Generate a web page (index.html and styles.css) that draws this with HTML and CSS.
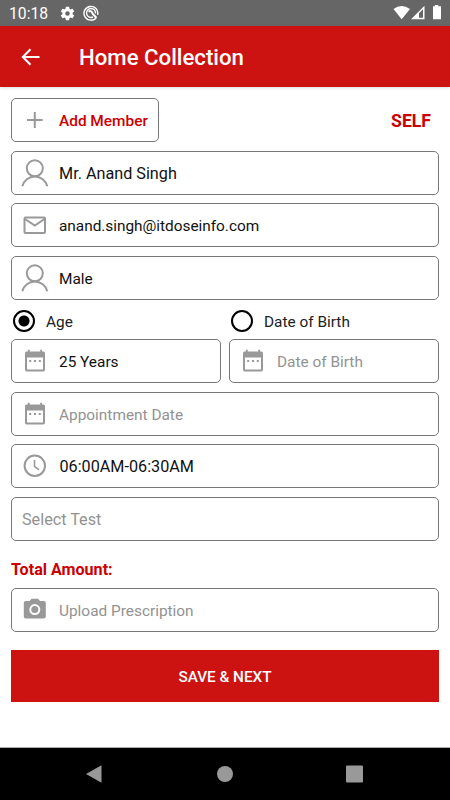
FILE: index.html
```html
<!DOCTYPE html>
<html lang="en">
<head>
<meta charset="utf-8">
<title>Home Collection</title>
<link rel="stylesheet" href="styles.css">
</head>
<body>
<svg width="0" height="0" class="defs">
  <symbol id="person" viewBox="0 0 28 28"><circle cx="13.800" cy="9.300" r="8" /><path d="M1.300 27.300A12.900 12.900 0 0 1 26.300 27.300"/></symbol>
  <symbol id="calendar" viewBox="0 0 28 28"><path fill-rule="evenodd" d="M6.800 2.800H8.700V4.600H19.200V2.800H21.100V4.600H22.500Q24 4.600 24 6.100V22.700Q24 24.500 22.200 24.500H5.600Q4 24.500 4 22.700V6.100Q4 4.600 5.500 4.600H6.800zM6 10.500V22.500H22V10.500z"/><path d="M8.200 13h2v2H8.200zM13 13h2v2H13zM17.800 13h2v2H17.800z"/></symbol>
</svg>
<div class="status">
  <span class="clock">10:18</span>
  <svg class="gear" viewBox="0 0 24 24"><path d="M19.140 12.940c.04-.3.060-.61.060-.94 0-.32-.02-.64-.07-.94l2.030-1.580c.18-.14.230-.41.120-.61l-1.920-3.320c-.12-.22-.37-.29-.59-.22l-2.390.96c-.5-.38-1.030-.7-1.620-.94l-.36-2.540c-.04-.24-.24-.41-.48-.41h-3.840c-.24 0-.43.170-.47.410l-.36 2.540c-.59.240-1.130.570-1.620.940l-2.390-.96c-.22-.08-.47 0-.59.220L2.740 8.870c-.12.210-.08.470.120.610l2.030 1.580c-.05.3-.09.630-.09.940s.02.640.070.940l-2.030 1.580c-.18.140-.23.410-.12.610l1.920 3.320c.12.220.37.290.59.220l2.390-.96c.5.380 1.030.7 1.620.94l.36 2.540c.05.240.24.410.48.410h3.840c.24 0 .44-.17.470-.41l.36-2.540c.59-.24 1.130-.56 1.620-.94l2.390.96c.22.080.47 0 .59-.22l1.920-3.320c.12-.22.070-.47-.12-.61l-2.010-1.580zM12 15.200A3.200 3.200 0 1 1 12 8.800a3.200 3.200 0 0 1 0 6.400z"/></svg>
  <svg class="ring" viewBox="0 0 16 16"><path d="M13.500 12.300A6.900 6.900 0 1 1 14.600 9.900"/><path d="M10 12A4.500 4.500 0 1 1 12.500 8.500"/><path class="needle" d="M5.500 6.600C7.500 5.400 9 6.500 9.800 8.900L13.200 12.500"/></svg>
  <svg class="signals" viewBox="0 0 50 16"><path d="M1.500 4Q9.500-1.800 18 4L9.700 14.200z"/><path fill-rule="evenodd" d="M19 14.200L32.500 .8V14.200zM27 8.300V12.700H31V4.200z"/><path d="M41 1.200H42.900V0H46.300V1.200H49V14.200H41V1.200z"/></svg>
</div>
<header>
  <svg viewBox="0 0 20 18"><path d="M18.500 9H2M9.500 1.200L1.800 9L9.500 16.800"/></svg>
  <h1>Home Collection</h1>
</header>
<main>
  <div class="top">
    <div class="field add"><svg class="icon line" viewBox="0 0 28 28"><path d="M13.800 6v16M6 14h15.600"/></svg><span>Add Member</span></div>
    <b class="self">SELF</b>
  </div>
  <div class="field"><svg class="icon line"><use href="#person"/></svg><span class="wide">Mr. Anand Singh</span></div>
  <div class="field"><svg class="icon line" viewBox="0 0 28 28"><rect x="3.500" y="6.500" width="20.500" height="15.500" rx="1"/><path d="M4 8L13.800 14.500L23.500 8"/></svg><span class="email">anand.singh@itdoseinfo.com</span></div>
  <div class="field"><svg class="icon line"><use href="#person"/></svg><span>Male</span></div>
  <div class="pair radios">
    <label><i class="radio on"></i><span>Age</span></label>
    <label><i class="radio"></i><span>Date of Birth</span></label>
  </div>
  <div class="pair fields">
    <div class="field"><svg class="icon"><use href="#calendar"/></svg><span>25 Years</span></div>
    <div class="field hint"><svg class="icon"><use href="#calendar"/></svg><span>Date of Birth</span></div>
  </div>
  <div class="field hint"><svg class="icon"><use href="#calendar"/></svg><span>Appointment Date</span></div>
  <div class="field"><svg class="icon line" viewBox="0 0 28 28"><circle cx="13.800" cy="13.800" r="10.200"/><path class="hands" d="M13.500 8V14.300L18 17.800"/></svg><span class="wide time">06:00AM-06:30AM</span></div>
  <div class="field hint bare"><span class="wide">Select Test</span></div>
  <b class="total">Total Amount:</b>
  <div class="field hint"><svg class="icon" viewBox="0 0 28 28"><path fill-rule="evenodd" d="M10.500 2.800H17L19 5H22.800Q24.800 5 24.800 7V20.500Q24.800 22.500 22.800 22.500H4.800Q2.800 22.500 2.800 20.500V7Q2.800 5 4.800 5H8.500zM13.800 8.100a5.500 5.500 0 1 0 0 11a5.500 5.500 0 0 0 0-11z"/><circle cx="13.800" cy="13.600" r="3.500"/></svg><span>Upload Prescription</span></div>
  <button>SAVE &amp; NEXT</button>
</main>
<nav>
  <svg viewBox="0 0 450 52"><path d="M86 26L101.500 17.200V34.800z"/><circle cx="225" cy="26" r="8"/><rect x="346" y="17.500" width="17" height="17" rx="1"/></svg>
</nav>
</body>
</html>
```
FILE: styles.css
```css
* { box-sizing: border-box; }
body {
  margin: 0;
  width: 450px;
  height: 800px;
  overflow: hidden;
  display: flex;
  flex-direction: column;
  background: #fff;
  font: 15.4px/20px Roboto, sans-serif;
  color: #111;
}
svg { display: block; flex: none; }
.defs { position: absolute; }
.status {
  height: 26px;
  background: #666;
  color: #fff;
  display: flex;
  align-items: center;
  padding: 0 8px 0 9px;
}
.clock { width: 50px; font-size: 15.7px; padding-top: 2px; }
.gear { width: 17px; height: 17px; fill: #fff; }
.ring { width: 16px; height: 16px; margin-left: 7px; fill: none; stroke: #fff; stroke-width: 1.400; }
.needle { stroke-width: 2; }
.signals { width: 50px; height: 16px; margin: 0 0 0 auto; fill: #fff; }
header {
  height: 61px;
  background: #cd1212;
  color: #fff;
  display: flex;
  align-items: center;
  padding-left: 21px;
  box-shadow: 0 1px 3px rgba(0, 0, 0, .15);
}
header svg { width: 20px; height: 18px; fill: none; stroke: #fff; stroke-width: 2; }
h1 { margin: 1px 0 0 38px; font-size: 22.2px; line-height: 28px; font-weight: 500; }
main { flex: 1; padding: 11px 11px 0; display: flex; flex-direction: column; gap: 8.500px; }
.top, .pair { display: flex; justify-content: space-between; gap: 9px; }
.top { align-items: center; }
.field {
  height: 44px;
  flex: none;
  border: 1px solid #777;
  border-radius: 5px;
  display: flex;
  align-items: center;
  padding-left: 9px;
}
.field span { padding-top: 2px; }
.pair .field { flex: 1; }
.fields { margin: -1px 0 .8px; }
.pair .field + .field { margin-left: -1px; }
.icon { width: 28px; height: 28px; margin-right: 10px; fill: #999; }
.line { fill: none; stroke: #999; stroke-width: 2; }
.hands { stroke-width: 1.600; }
.wide { font-size: 16.2px; }
.time { margin-left: .5px; }
.email { letter-spacing: -.02px; }
.add { width: 148px; color: #cc0000; font-weight: 500; }
.self { color: #cc0000; font-size: 17.6px; font-weight: 700; margin: 2px 8px 0 0; }
.hint { color: #929292; }
.bare { padding-left: 10px; }
.radios { height: 26px; margin: 0 0 -3px; }
.radios label { flex: 1; display: flex; align-items: center; gap: 11px; padding-left: 2px; color: #222; }
.radios label + label { margin-left: -1px; }
.radios span { padding-top: 2px; }
.radio { width: 22px; height: 22px; border: 2px solid #000; border-radius: 50%; }
.on { background: radial-gradient(circle, #000 5px, transparent 6px); }
.total { color: #cc0000; font-size: 16.1px; font-weight: 700; margin: 10.7px 0 0; }
button {
  height: 52px;
  margin-top: 9px;
  padding-top: 3px;
  border: 0;
  background: #cd1212;
  color: #fff;
  font: 500 15.3px Roboto, sans-serif;
}
nav { height: 53px; border-top: 1px solid #aaa; background: #000; flex: none; }
nav svg { width: 450px; height: 52px; fill: #999; }
```
